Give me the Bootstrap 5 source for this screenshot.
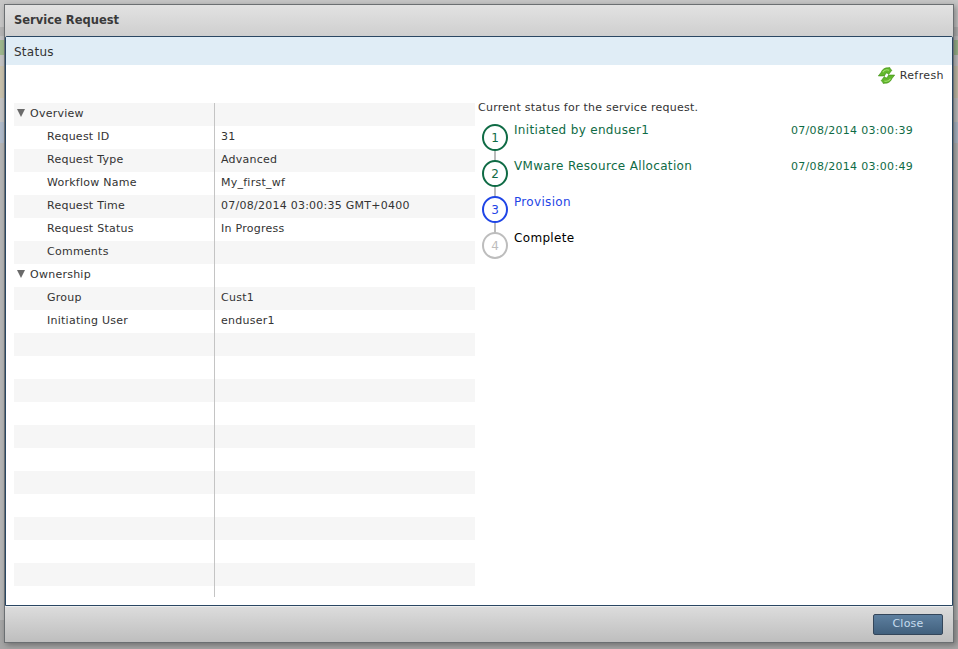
<!DOCTYPE html>
<html>
<head>
<meta charset="utf-8">
<link href="https://cdn.jsdelivr.net/npm/bootstrap@5.3.0/dist/css/bootstrap.min.css" rel="stylesheet">
<style>
html,body{height:649px;overflow:hidden}
body{background:linear-gradient(#c6c6c6 0 27px,#b4b4b4 27px 36px,#c2c2c2 36px 40px,#9fb98f 40px 55px,#c4c4c4 55px 66px,#c9c2ad 66px 98px,#c4c4c4 98px 122px,#b1bccb 122px 143px,#b6b6b6 143px 620px,#a6a6a6 620px);font-family:"DejaVu Sans",Verdana,sans-serif;font-size:11px;letter-spacing:.25px;color:#333;padding:4px 4px 6px 4px}
.shell{height:639px;border:1px solid #6b6f72;background:#ccc;box-shadow:2px 2px 6px rgba(0,0,0,.35)}
.shell-top{height:31px;padding-left:9px;background:linear-gradient(#e2e2e2,#cfcfcf);font-weight:700;color:#3a3a3a;font-size:11.5px;letter-spacing:0}
.pane{flex:1 1 0;min-height:0;background:#fff;border:1px solid #2a4763;border-radius:2px 2px 0 0}
.pane-title{height:28px;padding:1px 0 0 8px;background:#e0edf6;font-size:12px;color:#333}
.refresh-row{height:35px;padding:2px 8px 0 0;color:#333}
.refresh-text{padding-top:1px;letter-spacing:.4px}
.refresh-row svg{margin-right:5px}
.pane-body{padding-left:8px}
.props{width:461px;height:494px;flex:none;position:relative;margin-top:3px}
.prow{height:23px}
.prow:nth-child(odd){background:#f6f6f6}
.pname{width:200px;flex:none;padding-left:33px}
.pname.grp{padding-left:3px}
.pval{padding-left:7px}
.tri{display:inline-block;width:0;height:0;border-left:4.5px solid transparent;border-right:4.5px solid transparent;border-top:8px solid #6a6a6a;margin-right:5px}
.vline{position:absolute;left:200px;top:0;bottom:0;width:1px;background:#c4c4c4}
.steps-col{padding-left:3px;flex:1}
.lead-line{height:16px;line-height:16px}
.step{height:36px;position:relative;padding-left:36px;font-size:12px;letter-spacing:.33px}
.step-num{position:absolute;left:4px;top:8px;width:26px;height:27px;border:2px solid currentColor;border-radius:50%;background:#fff;z-index:1;font-size:12px;letter-spacing:0}
.step-link{position:absolute;left:16px;top:34px;width:2px;height:11px;background:#bbb}
.step-text{padding-top:7px;line-height:15px}
.step-when{width:122px;font-size:11px;letter-spacing:.3px;line-height:15px;padding-top:7px;margin-right:39px;white-space:nowrap}
.st-done{color:#0f6b45}
.st-now{color:#1f45e6}
.st-wait{color:#000}
.st-wait .step-num{color:#bdbdbd}
.shell-foot{height:36px;padding-right:10px;background:linear-gradient(#dcdcdc,#bebebe);border-top:1px solid #eee}
.close-btn{width:70px;height:21px;padding:0;border:1px solid #34465a;border-radius:2px;background:linear-gradient(#5d7f9f,#41607d);color:#c6dcef;font-size:11px;font-family:inherit;letter-spacing:.25px}
.close-btn:hover{background:linear-gradient(#5d7f9f,#41607d);color:#c6dcef}
</style>
</head>
<body>
<div class="shell d-flex flex-column">
  <div class="shell-top d-flex align-items-center">Service Request</div>
  <div class="pane d-flex flex-column">
    <div class="pane-title d-flex align-items-center">Status</div>
    <div class="refresh-row d-flex justify-content-end align-items-start">
      <span class="d-flex align-items-center">
        <svg width="17" height="17" viewBox="0 0 16 16" aria-hidden="true">
          <path d="M.3 8.4 L3 5 C4 2 7 .4 9.5 .8 L11 .4 L11.5 1.7 C12.5 2.4 13 3 13 3 L10 7 C9.4 6.2 8.6 5.6 7.6 5.6 L6 8.4 Z" fill="#62b82c" stroke="#3f8e14" stroke-width=".6"/>
          <path d="M15.7 7.6 L13 11 C12 14 9 15.6 6.5 15.2 L5 15.6 L4.5 14.3 C3.5 13.6 3 13 3 13 L6 9 C6.6 9.8 7.4 10.4 8.4 10.4 L10 7.6 Z" fill="#62b82c" stroke="#3f8e14" stroke-width=".6"/>
          <path d="M4.5 4.8 C6 2.6 8.5 2.2 10.5 3" fill="none" stroke="#a4e070" stroke-width="1"/>
          <path d="M6 13.2 C8 13.8 10.5 13 11.8 11" fill="none" stroke="#a4e070" stroke-width="1"/>
        </svg><span class="refresh-text">Refresh</span>
      </span>
    </div>
    <div class="pane-body d-flex">
      <div class="props">
        <div class="prow d-flex align-items-center"><div class="pname grp"><span class="tri"></span>Overview</div></div>
        <div class="prow d-flex align-items-center"><div class="pname">Request ID</div><div class="pval">31</div></div>
        <div class="prow d-flex align-items-center"><div class="pname">Request Type</div><div class="pval">Advanced</div></div>
        <div class="prow d-flex align-items-center"><div class="pname">Workflow Name</div><div class="pval">My_first_wf</div></div>
        <div class="prow d-flex align-items-center"><div class="pname">Request Time</div><div class="pval">07/08/2014 03:00:35 GMT+0400</div></div>
        <div class="prow d-flex align-items-center"><div class="pname">Request Status</div><div class="pval">In Progress</div></div>
        <div class="prow d-flex align-items-center"><div class="pname">Comments</div></div>
        <div class="prow d-flex align-items-center"><div class="pname grp"><span class="tri"></span>Ownership</div></div>
        <div class="prow d-flex align-items-center"><div class="pname">Group</div><div class="pval">Cust1</div></div>
        <div class="prow d-flex align-items-center"><div class="pname">Initiating User</div><div class="pval">enduser1</div></div>
        <div class="prow"></div><div class="prow"></div><div class="prow"></div><div class="prow"></div><div class="prow"></div><div class="prow"></div><div class="prow"></div><div class="prow"></div><div class="prow"></div><div class="prow"></div><div class="prow"></div>
        <div class="vline"></div>
      </div>
      <div class="steps-col">
        <div class="lead-line">Current status for the service request.</div>
        <div class="step st-done d-flex justify-content-between"><span class="step-num d-flex align-items-center justify-content-center">1</span><span class="step-link"></span><span class="step-text">Initiated by enduser1</span><span class="step-when">07/08/2014 03:00:39</span></div>
        <div class="step st-done d-flex justify-content-between"><span class="step-num d-flex align-items-center justify-content-center">2</span><span class="step-link"></span><span class="step-text">VMware Resource Allocation</span><span class="step-when">07/08/2014 03:00:49</span></div>
        <div class="step st-now d-flex"><span class="step-num d-flex align-items-center justify-content-center">3</span><span class="step-link"></span><span class="step-text">Provision</span></div>
        <div class="step st-wait d-flex"><span class="step-num d-flex align-items-center justify-content-center">4</span><span class="step-text">Complete</span></div>
      </div>
    </div>
  </div>
  <div class="shell-foot d-flex align-items-center justify-content-end"><button type="button" class="btn close-btn">Close</button></div>
</div>
<script src="https://cdn.jsdelivr.net/npm/bootstrap@5.3.0/dist/js/bootstrap.bundle.min.js"></script>
</body>
</html>
